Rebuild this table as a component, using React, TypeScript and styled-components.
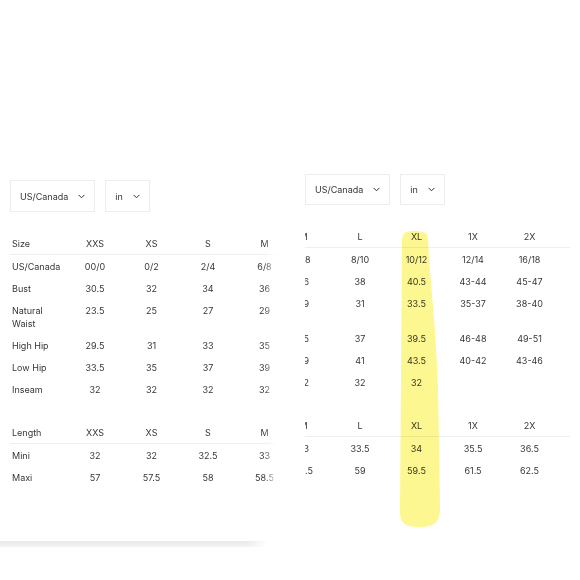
import { useLayoutEffect, useRef } from 'react';
import styled, { createGlobalStyle } from 'styled-components';

const GlobalStyle = createGlobalStyle`
  html, body {
    margin: 0;
    padding: 0;
    background: #ffffff;
  }
  body {
    font-family: Inter, 'Liberation Sans', sans-serif;
    color: #363636;
  }
`;

const Page = styled.div`
  width: 580px;
  height: 580px;
  overflow: hidden;
  display: flex;
  align-items: flex-start;
  gap: 12px;
`;

const Shot = styled.div<{ $top: number; $width: number }>`
  position: relative;
  flex-shrink: 0;
  margin-top: ${(p) => p.$top}px;
  width: ${(p) => p.$width}px;
`;

const Controls = styled.div<{ $inset: number }>`
  display: flex;
  gap: 10px;
  margin-left: ${(p) => p.$inset}px;
  margin-bottom: 20px;
`;

const Select = styled.div<{ $h: number }>`
  display: inline-flex;
  align-items: center;
  gap: 10px;
  box-sizing: border-box;
  height: ${(p) => p.$h}px;
  padding: 0 9px 0 9px;
  border: 1px solid #ededed;
  font-size: 9px;
  color: #363636;
`;

const Frame = styled.div<{ $inset: number; $width: number; $fade?: boolean }>`
  position: relative;
  margin-left: ${(p) => p.$inset}px;
  width: ${(p) => p.$width}px;
  &::after {
    content: '';
    display: ${(p) => (p.$fade ? 'block' : 'none')};
    position: absolute;
    top: 0;
    right: 0;
    bottom: 0;
    width: 16px;
    background: linear-gradient(to right, rgba(255, 255, 255, 0), #fff 90%);
    pointer-events: none;
  }
`;

const Scroller = styled.div`
  overflow-x: auto;
  scrollbar-width: none;
  &::-webkit-scrollbar {
    display: none;
  }
`;

const Table = styled.div<{ $gap?: number }>`
  margin-top: ${(p) => p.$gap ?? 0}px;
`;

const Row = styled.div<{ $head?: boolean }>`
  display: grid;
  grid-template-columns: 56.75px repeat(8, 56.5px);
  width: max-content;
  padding: 4.5px 14px 4.5px 0;
  font-size: 9px;
  line-height: 13px;
  border-bottom: ${(p) => (p.$head ? '1px solid #efefef' : 'none')};
`;

const Label = styled.div`
  padding-left: 2px;
  text-align: left;
`;

const Value = styled.div`
  text-align: center;
  white-space: nowrap;
`;

const SheetEdge = styled.div`
  margin-top: 53px;
  width: 268px;
  height: 6px;
  background: linear-gradient(to bottom, #e9e9e9, #f3f3f3);
  mask-image: linear-gradient(to right, #000 92%, transparent);
`;

const Marker = styled.svg`
  position: absolute;
  left: 96px;
  top: 54px;
  mix-blend-mode: multiply;
  filter: blur(0.6px);
  pointer-events: none;
`;

const sizes = ['XXS', 'XS', 'S', 'M', 'L', 'XL', '1X', '2X'];

const bodyRows = [
  { label: 'US/Canada', values: ['00/0', '0/2', '2/4', '6/8', '8/10', '10/12', '12/14', '16/18'] },
  { label: 'Bust', values: ['30.5', '32', '34', '36', '38', '40.5', '43-44', '45-47'] },
  { label: 'Natural Waist', values: ['23.5', '25', '27', '29', '31', '33.5', '35-37', '38-40'] },
  { label: 'High Hip', values: ['29.5', '31', '33', '35', '37', '39.5', '46-48', '49-51'] },
  { label: 'Low Hip', values: ['33.5', '35', '37', '39', '41', '43.5', '40-42', '43-46'] },
  { label: 'Inseam', values: ['32', '32', '32', '32', '32', '32', '', ''] },
];

const lengthRows = [
  { label: 'Mini', values: ['32', '32', '32.5', '33', '33.5', '34', '35.5', '36.5'] },
  { label: 'Maxi', values: ['57', '57.5', '58', '58.5', '59', '59.5', '61.5', '62.5'] },
];

const Chevron = () => (
  <svg width="7" height="5" viewBox="0 0 7 5">
    <polyline points="0.6,0.9 3.5,3.8 6.4,0.9" fill="none" stroke="#333" strokeWidth="1" />
  </svg>
);

type RowData = { label: string; values: string[] };

const SizeTable = ({ head, rows, gap }: { head: string; rows: RowData[]; gap?: number }) => (
  <Table $gap={gap}>
    <Row $head>
      <Label>{head}</Label>
      {sizes.map((s) => (
        <Value key={s}>{s}</Value>
      ))}
    </Row>
    {rows.map((r) => (
      <Row key={r.label}>
        <Label>{r.label}</Label>
        {r.values.map((v, i) => (
          <Value key={i}>{v}</Value>
        ))}
      </Row>
    ))}
  </Table>
);

const ChartView = ({ scroll = 0 }: { scroll?: number }) => {
  const ref = useRef<HTMLDivElement>(null);

  useLayoutEffect(() => {
    if (ref.current) ref.current.scrollLeft = scroll;
  }, [scroll]);

  return (
    <Scroller ref={ref}>
      <SizeTable head="Size" rows={bodyRows} />
      <SizeTable head="Length" rows={lengthRows} gap={21} />
    </Scroller>
  );
};

const App = () => {
  return (
    <>
      <GlobalStyle />
      <Page>
        <Shot $top={180} $width={290}>
          <Controls $inset={10}>
            <Select $h={32}>
              <span>US/Canada</span>
              <Chevron />
            </Select>
            <Select $h={32}>
              <span>in</span>
              <Chevron />
            </Select>
          </Controls>
          <Frame $inset={10} $width={270} $fade>
            <ChartView />
          </Frame>
          <SheetEdge />
        </Shot>

        <Shot $top={174} $width={278}>
          <Controls $inset={3}>
            <Select $h={31}>
              <span>US/Canada</span>
              <Chevron />
            </Select>
            <Select $h={31}>
              <span>in</span>
              <Chevron />
            </Select>
          </Controls>
          <Frame $inset={3} $width={265}>
            <ChartView scroll={256} />
          </Frame>
          <Marker width="46" height="302" viewBox="0 0 46 302">
            <path
              d="M4 12 C4 5 8 3 16 3 C25 3 30 4 30 11 L31 30 C33 60 38 100 40 160 L42 280 C42 295 36 299 21 299 C8 299 2 296 2 284 L3 150 Z"
              fill="#fbf67c"
              fillOpacity="0.85"
            />
          </Marker>
        </Shot>
      </Page>
    </>
  );
};

export default App;
